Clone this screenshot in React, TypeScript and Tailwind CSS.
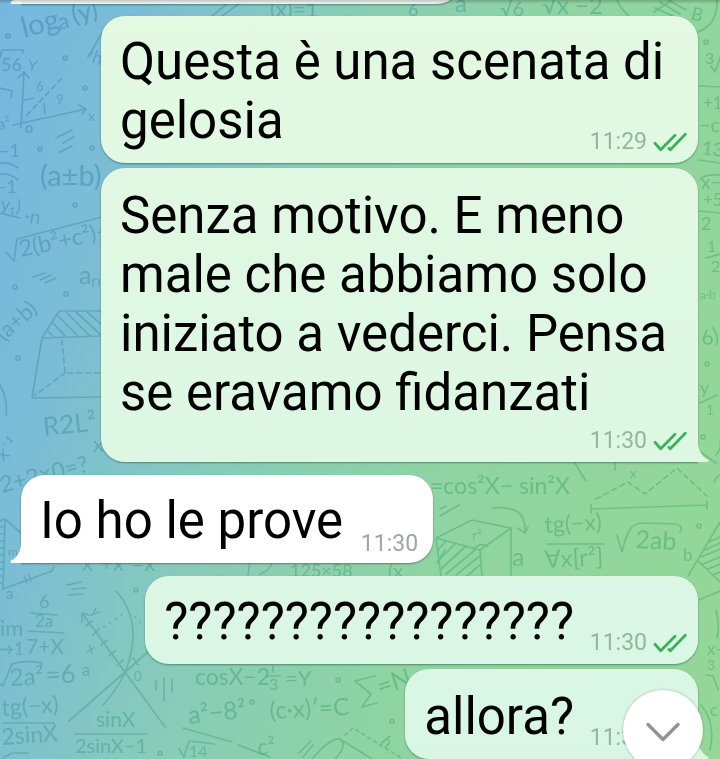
import { ChevronDown } from "lucide-react";
import clsx from "clsx";

interface Message {
  id: number;
  text: string;
  time: string;
  outgoing: boolean;
  tail: boolean;
}

const MESSAGES: Message[] = [
  { id: 1, text: "Questa è una scenata di gelosia", time: "11:29", outgoing: true, tail: false },
  {
    id: 2,
    text: "Senza motivo. E meno male che abbiamo solo iniziato a vederci. Pensa se eravamo fidanzati",
    time: "11:30",
    outgoing: true,
    tail: true,
  },
  { id: 3, text: "Io ho le prove", time: "11:30", outgoing: false, tail: true },
  { id: 4, text: "?????????????????", time: "11:30", outgoing: true, tail: false },
  { id: 5, text: "allora?", time: "11:30", outgoing: true, tail: true },
];

// [text, x, baseline, size, rotation]
const FORMULAS: [string, number, number, number, number][] = [
  ["log", 24, 38, 29, -15],
  ["a", 60, 30, 22, -15],
  ["(y)", 74, 24, 26, -15],
  ["56", 1, 71, 18, 0],
  ["Y", 27, 70, 15, 10],
  ["6", 36, 91, 13, 0],
  ["9", 56, 104, 13, 0],
  ["x", 88, 121, 14, 0],
  ["h", 91, 62, 18, 20],
  ["a²", -2, 130, 16, -8],
  ["−1", -1, 157, 18, 0],
  ["−1", -4, 193, 18, 0],
  ["y₁)", 0, 210, 18, 8],
  ["·n", 24, 222, 19, 8],
  ["(a±b)", 40, 186, 29, 0],
  ["2(b²+c²)−", 21, 257, 23, -12],
  ["aₙ", 79, 284, 25, 0],
  ["(a+b)", 4, 342, 22, -42],
  ["R2L²", 44, 436, 26, -6],
  ["x", 93, 452, 22, 0],
  ["x⁻¹", 3, 462, 20, -42],
  ["2+2×0=?", 2, 493, 23, -14],
  ["m", 8, 556, 12, 0],
  ["a", 6, 599, 15, 0],
  ["x²+x²=x", 82, 571, 22, 0],
  ["6", 39, 608, 18, 0],
  ["2a", 35, 627, 17, 0],
  ["7+X", 26, 654, 21, 0],
  ["im", 0, 636, 22, 0],
  ["→1", -3, 655, 17, 0],
  ["2a²", 10, 686, 24, -3],
  ["=6", 46, 684, 26, -3],
  ["a", 82, 676, 17, -5],
  ["tg(−x)", 2, 716, 23, -4],
  ["2sinX", 2, 745, 23, -4],
  ["sinX", 96, 727, 21, 0],
  ["2sinX−1", 75, 753, 20, 0],
  ["y", 90, 612, 15, 45],
  ["x", 86, 652, 15, 20],
  ["0", 134, 681, 13, 0],
  ["cosX−2", 195, 685, 23, 0],
  ["3", 269, 690, 16, 0],
  ["=Y", 285, 686, 22, 0],
  ["a²−8²", 189, 724, 25, -6],
  ["14", 189, 757, 16, 0],
  ["c²", 258, 755, 22, -5],
  ["(c·x)′=C", 270, 719, 24, -3],
  ["=N", 380, 696, 26, -18],
  ["h", 380, 742, 16, 50],
  ["125×58", 290, 577, 18, 0],
  ["(x", 388, 578, 20, 0],
  ["=cos²X− sin²X", 430, 494, 23, 0],
  ["r²", 472, 540, 14, 0],
  ["a", 512, 566, 25, 0],
  ["tg(−x)", 545, 533, 23, -3],
  ["∀x[r²]", 545, 568, 24, -3],
  ["2ab", 635, 548, 25, 3],
  ["b", 683, 561, 17, 0],
  ["x", 630, 478, 13, 0],
  ["(x)=1", 270, 17, 22, 0],
  ["6", 408, 16, 18, 0],
  ["a", 455, 12, 24, 0],
  ["√6", 500, 16, 20, 0],
  ["√x −2", 542, 14, 24, 0],
  ["B", 690, 19, 18, 15],
  ["3", 705, 64, 16, 0],
  ["+1", 703, 109, 17, 0],
  ["−c", 699, 132, 20, 0],
  ["13", 701, 154, 19, 8],
  ["x−", 701, 189, 19, 0],
  ["+5", 703, 206, 17, 0],
  ["2", 701, 230, 18, 0],
  ["1", 707, 252, 16, 0],
  ["2", 711, 272, 16, 0],
  ["a·b", 700, 299, 12, 0],
  ["6)", 703, 346, 21, -15],
  ["y", 700, 394, 18, 0],
  ["1", 706, 415, 14, 0],
  ["x−", 707, 655, 17, 0],
  ["3", 707, 670, 14, 0],
  ["c", 710, 716, 17, 0],
];

const DOTS: [number, number, number][] = [
  [8, 36, 2], [65, 58, 2], [85, 88, 2], [29, 129, 3], [40, 149, 2], [92, 148, 2], [75, 205, 2],
  [15, 287, 2], [66, 294, 2], [18, 358, 2], [136, 590, 2], [160, 753, 2], [252, 702, 2],
  [338, 680, 2], [392, 721, 2], [699, 526, 2], [706, 42, 2], [703, 437, 2], [707, 364, 2],
];

function Wallpaper() {
  return (
    <svg
      className="absolute inset-0 size-full"
      viewBox="0 0 720 759"
      preserveAspectRatio="xMidYMid slice"
      aria-hidden="true"
    >
      <defs>
        <linearGradient id="ink" gradientUnits="userSpaceOnUse" x1="0" y1="100" x2="520" y2="500">
          <stop offset="0" stopColor="#3a7fb0" />
          <stop offset="0.5" stopColor="#3a9494" />
          <stop offset="1" stopColor="#3ea368" />
        </linearGradient>
      </defs>
      <g opacity="0.42" stroke="url(#ink)" fill="none" strokeWidth="1.7" strokeLinecap="round" strokeLinejoin="round">
        {DOTS.map(([x, y, r]) => (
          <circle key={`${x}-${y}`} cx={x} cy={y} r={r} />
        ))}
        {/* axes */}
        <path d="M0 58 L2 50 H23 V53 M0 88 L12 91 L11 97" />
        <path d="M21 128 L24 72 M18 78 L24 72 L29 78 M13 125 L86 109 M79 105 L86 109 L82 114 M24 100 L34 98 M45 114 L44 103" />
        <path d="M27 115 L62 78" strokeDasharray="5 4" />
        <path d="M102 33 L88 57 L93 52 M56 138 L72 130 M63 143 L74 137 M60 152 L72 146" />
        <path d="M0 163 Q10 162 18 168 M0 174 Q10 173 18 180 M0 213 L20 218" />
        {/* root and frustum */}
        <path d="M6 252 L14 261 L17 239 L102 217 M33 277 L45 273 M40 280 L51 275 M45 283 L56 278" />
        <path d="M102 311 H59 L42 338 L102 336 M42 338 L32 398 L102 397 M0 385 Q8 400 6 415" />
        <path d="M57 315 L78 336 M66 312 L90 336 M76 312 L101 335 M87 312 L102 325 M52 322 L66 337 M47 330 L54 337" />
        <path d="M62 340 L65 373 H102 M65 373 L35 395" strokeDasharray="5 4" />
        {/* triangle */}
        <path d="M0 521 L5 519 L21 533 M5 519 L3 589 L52 571 L54 566 M0 527 H5 M0 534 H5 M0 541 H4 M0 548 H4 M0 555 H4 M0 562 H4 M0 569 H4 M0 576 H4 M0 583 H3 M25 577 L27 583 M29 575 L31 581" />
        <path d="M67 585 L81 582 M72 589 L86 588 M68 595 L83 594" />
        <path d="M31 613 L57 615 M28 631 L64 633 M0 684 L3 686 L12 664 Q25 660 42 663 L41 667" />
        <path d="M3 723 H54 M75 734 H147 M3 758 L12 753 H28" />
        {/* crossing axes with a parabola */}
        <path d="M82 613 L165 727 M82 622 V613 L89 615 M116 591 C143 620 137 668 103 705 M69 721 L148 652" />
        <path d="M86 626 L92 621 M93 635 L99 629 M101 645 L107 640 M109 656 L115 651 M117 666 L123 660 M133 658 L138 665" />
        <path d="M104 627 L124 613 M135 617 L144 627" strokeDasharray="1 6" />
        <path d="M156 681 V690 M164 678 V701 M172 679 V692 M267 676 H280 M273 666 V672" />
        <path d="M183 728 L232 742 M179 749 L184 757 L189 741 L215 744 M238 745 L270 757" />
        <path d="M375 676 L355 681 L371 694 L362 707 L377 703 M299 753 L311 741 M303 757 L313 745" />
        <path d="M312 759 Q330 738 340 739 Q348 745 335 759 M340 739 L372 759" />
        <path d="M345 735 L353 728 L400 757" strokeDasharray="3 4" />
        {/* cube */}
        <path d="M440 509 L446 506 M440 516 L459 505 M492 508 C515 506 525 512 525 530 M517 528 L525 533 L528 527" />
        <path d="M436 538 L472 520 L511 528 L480 550 Z M436 538 L441 576 M480 550 L482 576 M511 528 V576 M474 549 Q480 542 487 546" />
        <path d="M438 550 L446 541 M439 560 L456 543 M441 569 L466 546 M446 574 L475 550 M456 575 L481 555 M467 576 L481 564" />
        <path d="M250 561 L248 575 M272 562 Q271 570 260 574 M437 563 L445 550" />
        <path d="M574 462 L586 481 M615 461 V470 M547 544 H604 M617 535 L622 552 C627 530 632 523 642 523 L676 524 Q684 526 680 532" />
        <path d="M591 504 V513 M591 509 L707 505 M707 501 V509" />
        <path d="M596 499 L628 482 L645 494 L677 468 L707 496" strokeDasharray="5 4" />
        <path d="M720 522 L688 576 M698 561 L720 582 M701 557 L720 549 M705 550 L720 543 M709 542 L720 537 M703 564 L720 557 M708 569 L720 564 M713 575 L720 572" />
        {/* sphere in the top corner */}
        <path d="M617 0 Q620 8 628 15 M654 12 L672 0 M655 8 L673 16 M660 2 L680 14 M668 0 L686 10 M717 0 Q718 24 698 32 M212 16 L232 0 M222 16 L240 3" />
        {/* right margin */}
        <path d="M699 86 L720 87 M711 66 L715 72 L720 58 M699 160 L720 163 M700 180 Q702 174 720 175 M699 211 L720 213 M706 258 L720 254" />
        <path d="M700 403 L717 395 M699 451 L716 463 M716 455 Q722 448 720 442 M714 482 Q717 476 720 475 M699 600 L720 591 M716 610 Q720 625 717 638 M706 675 L713 676 L718 690 M701 705 Q716 722 710 750" />
      </g>
      <g fill="url(#ink)" opacity="0.46" className="font-[Lato,sans-serif]">
        {FORMULAS.map(([text, x, y, size, angle]) => (
          <text key={`${x}-${y}`} x={x} y={y} fontSize={size} transform={`rotate(${angle} ${x} ${y})`}>
            {text}
          </text>
        ))}
      </g>
    </svg>
  );
}

function Checks() {
  return (
    <svg width="34" height="22" viewBox="0 0 34 22" role="img" aria-label="Letto">
      <path
        d="M2 12.3 L7.7 18.7 L22 4.3 M15.9 17.4 L17.3 18.7 L32.3 3.3"
        fill="none"
        stroke="#3cb15c"
        strokeWidth="2.8"
        strokeLinecap="round"
        strokeLinejoin="round"
      />
    </svg>
  );
}

function Tail({ outgoing }: { outgoing: boolean }) {
  return (
    <svg
      className={clsx("absolute bottom-0", outgoing ? "-right-[11px] text-[#ddf7e3]" : "-left-[11px] -scale-x-100 text-white")}
      width="12"
      height="20"
      viewBox="0 0 12 20"
      aria-hidden="true"
    >
      <path d="M0 0 H1 C1 8 5 15 11 17.6 Q12.500 19.600 10 20 H0 Z" fill="currentColor" />
    </svg>
  );
}

function Bubble({ message }: { message: Message }) {
  const { text, time, outgoing, tail } = message;
  return (
    <div
      className={clsx(
        "relative flow-root rounded-[24px] pr-3 pb-[13px] pl-[19px] shadow-[0_1px_2px_rgba(30,80,60,0.55)]",
        outgoing ? "bg-linear-to-b from-[#e3f9e1] to-[#d9f6e5] bg-fixed" : "bg-white",
        outgoing && tail ? "pt-[18px]" : "pt-4",
        tail && (outgoing ? "rounded-br-none" : "rounded-bl-none")
      )}
    >
      <p className="text-[51px] leading-[59px] text-black">
        {text}
        {/* keeps the last line clear of the time */}
        <span className={clsx("float-right h-[27px]", outgoing ? "w-[112px]" : "w-[78px]")} />
      </p>
      <div
        className={clsx(
          "absolute flex items-center gap-[6px] text-[23px] leading-7",
          outgoing ? "right-[11px] bottom-[7px] text-[#93b79c]" : "right-[15px] bottom-[5px] text-[#a0a5a8]"
        )}
      >
        <time>{time}</time>
        {outgoing && <Checks />}
      </div>
      {tail && <Tail outgoing={outgoing} />}
    </div>
  );
}

export default function App() {
  return (
    <main className="relative min-h-screen overflow-hidden bg-[linear-gradient(103deg,#76b7df_0%,#7bbcd6_15%,#88cbba_36%,#8fd4a2_62%,#94d797_100%)] font-[Roboto,sans-serif]">
      <Wallpaper />
      <div className="relative pr-[22px] pl-[21px]">
        {/* bottom edge of the previous message */}
        <div className="relative -mt-[84px] h-[88px] w-[440px] rounded-[24px] rounded-bl-none bg-[#f6f6f6] shadow-[0_1px_2px_rgba(30,80,60,0.55)]">
          <Tail outgoing={false} />
        </div>
        <ul className="pt-3">
          {MESSAGES.map((m, i) => (
            <li
              key={m.id}
              className={clsx(
                "flex",
                m.outgoing ? "justify-end pl-20" : "justify-start pr-20",
                i > 0 && (MESSAGES[i - 1].outgoing === m.outgoing ? "mt-[5px]" : "mt-[13px]")
              )}
            >
              <Bubble message={m} />
            </li>
          ))}
        </ul>
      </div>
      <div className="absolute inset-x-0 top-0 h-1 bg-linear-to-b from-black/20 to-transparent" />
      <button
        type="button"
        aria-label="Vai in fondo"
        className="absolute right-[17px] -bottom-[11px] flex size-20 items-center justify-center rounded-full bg-white pt-1 text-[#92929c] shadow-[0_0_3px_rgba(0,0,0,0.25)]"
      >
        <ChevronDown className="size-15" strokeWidth={1.4} />
      </button>
    </main>
  );
}
